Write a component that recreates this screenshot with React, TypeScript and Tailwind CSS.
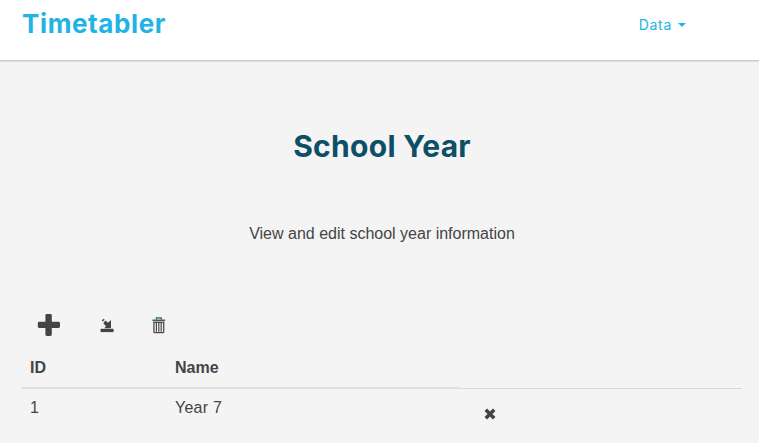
function PlusIcon() {
  return (
    <svg width="24" height="24" viewBox="0 0 24 24" fill="currentColor" aria-hidden="true">
      <path d="M9.800 1h3.600q1.400 0 1.400 1.400v6.400h6.800q1.400 0 1.400 1.400v3.400q0 1.400-1.400 1.400h-6.800v6.600q0 1.400-1.400 1.400H9.800q-1.400 0-1.400-1.400V15H2.200Q.8 15 .8 13.600v-3.400q0-1.400 1.400-1.400h6.200V2.400Q8.400 1 9.800 1z" />
    </svg>
  );
}

function ExportIcon() {
  return (
    <svg width="14" height="15" viewBox="0 0 14 15" fill="currentColor" aria-hidden="true">
      <path d="M1.700 2.400 3.600.8l1.100.9-2 1.900zM3.300 4.900l2.300-2.300 1.900 2 1.400-.6 2.100-2v8.200H4.200l1.700-2z" />
      <path d="M.6 10.800h13v3.300H.6z" />
    </svg>
  );
}

function TrashIcon() {
  return (
    <svg width="14" height="17" viewBox="0 0 14 17" fill="none" aria-hidden="true">
      <path d="M4.500 2.500V.8h4.800v1.700" stroke="#34606c" strokeWidth="1.300" />
      <path d="M.5 2.500h12.600v1.700H.5z" fill="#34606c" />
      <path d="M1.900 5.300v9.600q0 .7.800.7h8.200q.8 0 .8-.7V5.300z" stroke="#4c4c4c" strokeWidth="1.300" />
      <path d="M4.400 5.300v9.500M6.800 5.300v9.500M9.200 5.300v9.500" stroke="#4c4c4c" strokeWidth="1.200" />
    </svg>
  );
}

function RemoveIcon() {
  return (
    <svg width="12" height="12" viewBox="0 0 12 12" aria-hidden="true">
      <path d="M1.800 1.800l8.400 8.400M10.200 1.800l-8.400 8.400" stroke="currentColor" strokeWidth="3.600" />
    </svg>
  );
}

export default function App() {
  return (
    <div className="h-[443px] w-full overflow-hidden bg-[#f4f4f4] font-['Liberation_Sans',Arial,sans-serif] text-base text-[#444]">
      <header className="flex h-[61px] items-start justify-between border-b border-[#ccc] bg-white pr-[73px] pl-[22px] font-['Inter',sans-serif] text-[#20b4e4] shadow-[0_1px_1px_rgba(0,0,0,0.08)]">
        <a className="mt-[5px] text-[26px] leading-[38px] font-bold tracking-[0.62px]">Timetabler</a>
        <button className="mt-[15px] flex items-center text-sm leading-5 font-normal tracking-[0.7px]">
          Data
          <span className="ml-[6px] border-x-4 border-t-4 border-x-transparent border-t-current" />
        </button>
      </header>
      <main className="pt-[65px] pr-[17px] pl-[22px]">
        <h1 className="text-center font-['Inter',sans-serif] text-[30px] leading-10 font-bold tracking-[0.3px] text-[#0c4f66]">School Year</h1>
        <p className="mt-[56px] text-center leading-6">View and edit school year information</p>
        <div className="mt-[67px] flex h-6 items-center pl-[15px]">
          <button><PlusIcon /></button>
          <button className="ml-[39px]"><ExportIcon /></button>
          <button className="ml-[38px]"><TrashIcon /></button>
        </div>
        <div className="mt-[19px] grid grid-cols-[437px_283px] leading-6">
          <div className="grid h-[33px] grid-cols-[145px_1fr] border-b-2 border-[#ddd] pl-2 font-bold">
            <span>ID</span>
            <span>Name</span>
          </div>
          <div className="h-[33px] border-b border-[#d8d8d8]" />
          <div className="grid grid-cols-[145px_1fr] pt-[7px] pl-2">
            <span>1</span>
            <span className="tracking-[0.25px]">Year 7</span>
          </div>
          <button className="mt-[19px] ml-[25px] h-3 w-3"><RemoveIcon /></button>
        </div>
      </main>
    </div>
  );
}
